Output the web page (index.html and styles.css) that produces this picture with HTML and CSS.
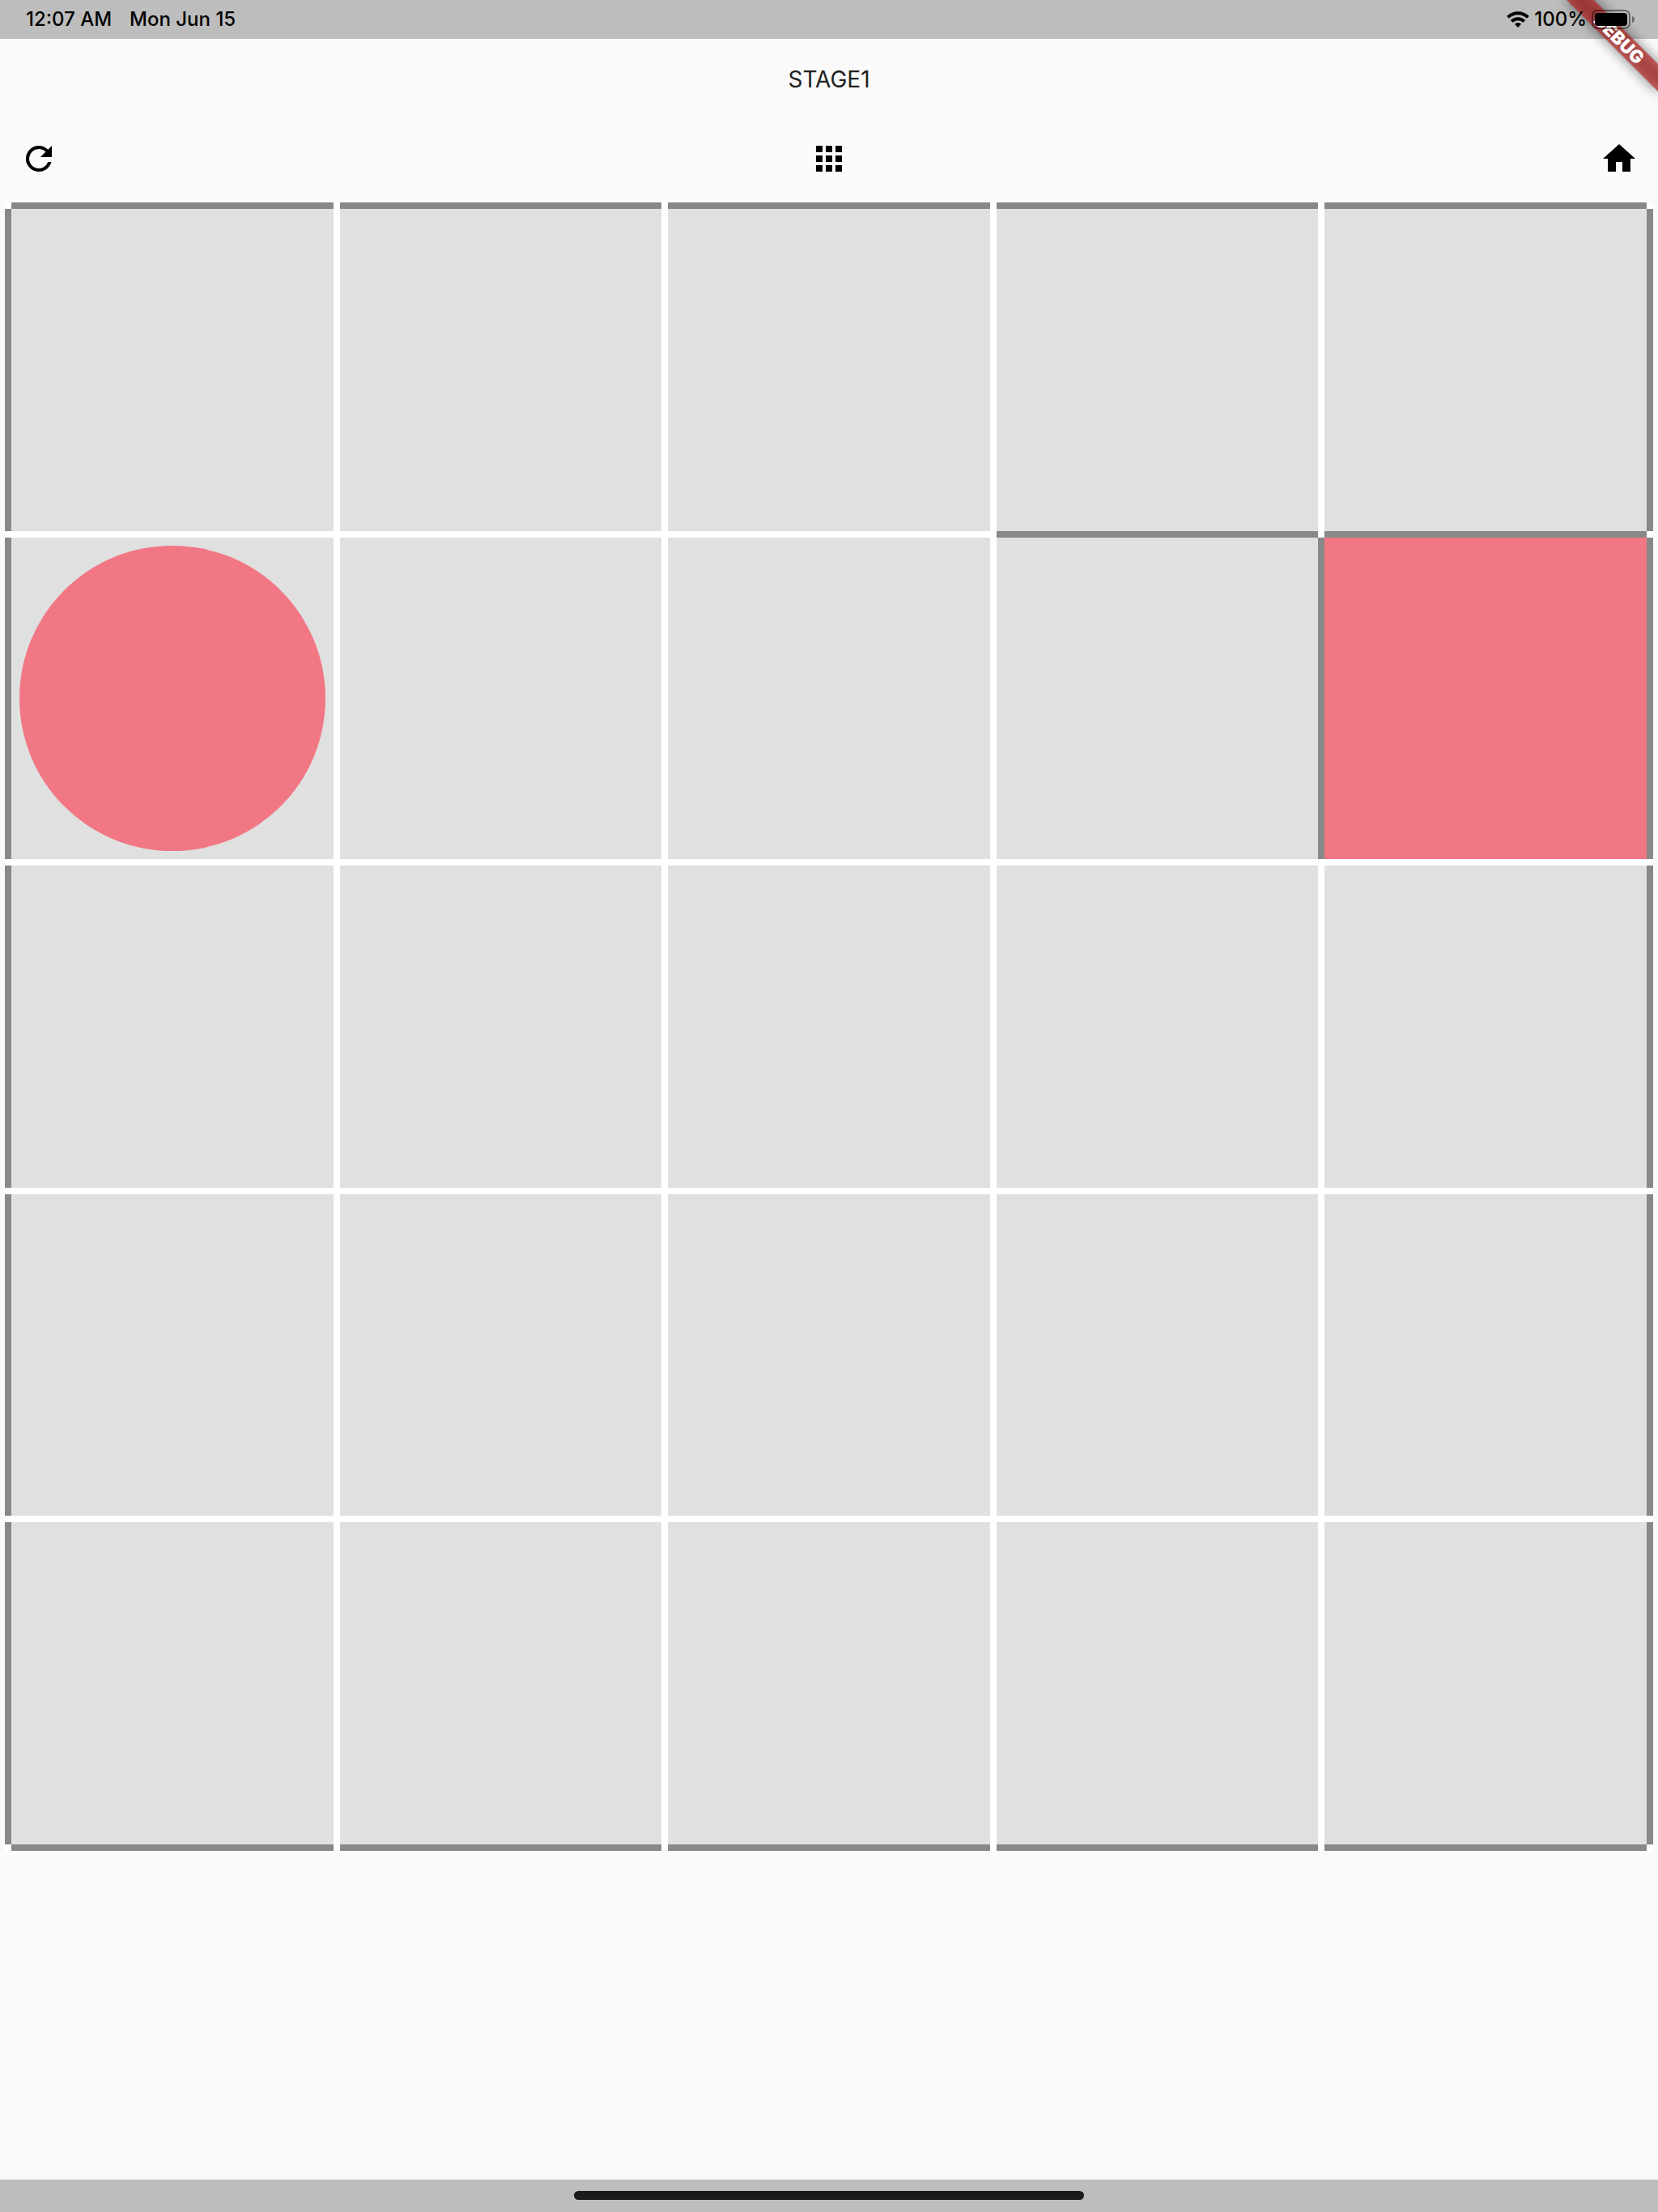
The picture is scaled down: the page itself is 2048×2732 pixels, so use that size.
FILE: index.html
```html
<!DOCTYPE html>
<html lang="en">
<head>
<meta charset="utf-8">
<meta name="viewport" content="width=device-width, initial-scale=1">
<title>STAGE1</title>
<link rel="stylesheet" href="styles.css">
</head>
<body>
<header class="status">
  <div class="status-group">
    <span>12:07 AM</span>
    <span>Mon Jun 15</span>
  </div>
  <div class="ribbon">
    <div class="ribbon-shadow"></div>
    <div class="ribbon-band">DEBUG</div>
  </div>
  <div class="status-group indicators">
    <svg class="wifi" viewBox="0 0 28 20" aria-hidden="true">
      <g fill="none" stroke="#000" stroke-width="4">
        <path d="M1.6 7.4A17.4 17.4 0 0 1 26.4 7.4"/>
        <path d="M6.2 12.4A11 11 0 0 1 21.8 12.4"/>
      </g>
      <path d="M14 20l-4-4.2a5.6 5.6 0 0 1 8 0z"/>
    </svg>
    <span>100%</span>
    <svg class="battery" viewBox="0 0 54 24" aria-hidden="true">
      <rect x="1" y="1" width="46" height="22" rx="6" fill="none" stroke="#000" stroke-opacity=".45" stroke-width="2"/>
      <rect x="4" y="4" width="40" height="16" rx="4"/>
      <path d="M50 8q3 1 3 4t-3 4z" fill-opacity=".45"/>
    </svg>
  </div>
</header>

<main class="game">
  <h1 class="title">STAGE1</h1>
  <nav class="toolbar">
    <button class="tool" type="button" aria-label="Restart">
      <svg viewBox="0 0 24 24"><path d="M17.65 6.35A7.96 7.96 0 0 0 12 4a8 8 0 1 0 7.73 10h-2.08A6 6 0 1 1 12 6c1.66 0 3.14.69 4.22 1.78L13 11h7V4z"/></svg>
    </button>
    <button class="tool" type="button" aria-label="Stages">
      <svg viewBox="0 0 24 24"><path d="M4 8h4V4H4zm6 12h4v-4h-4zm-6 0h4v-4H4zm0-6h4v-4H4zm6 0h4v-4h-4zm6-10v4h4V4zm-6 4h4V4h-4zm6 6h4v-4h-4zm0 6h4v-4h-4z"/></svg>
    </button>
    <button class="tool" type="button" aria-label="Home">
      <svg viewBox="0 0 24 24"><path d="M10 20v-6h4v6h5v-8h3L12 3 2 12h3v8z"/></svg>
    </button>
  </nav>

  <div class="board">
    <div class="cell wall-top wall-left"></div>
    <div class="cell wall-top"></div>
    <div class="cell wall-top"></div>
    <div class="cell wall-top"></div>
    <div class="cell wall-top wall-right"></div>

    <div class="cell wall-left"><div class="ball"></div></div>
    <div class="cell"></div>
    <div class="cell"></div>
    <div class="cell wall-top"></div>
    <div class="cell goal wall-top wall-left wall-right"></div>

    <div class="cell wall-left"></div>
    <div class="cell"></div>
    <div class="cell"></div>
    <div class="cell"></div>
    <div class="cell wall-right"></div>

    <div class="cell wall-left"></div>
    <div class="cell"></div>
    <div class="cell"></div>
    <div class="cell"></div>
    <div class="cell wall-right"></div>

    <div class="cell wall-bottom wall-left"></div>
    <div class="cell wall-bottom"></div>
    <div class="cell wall-bottom"></div>
    <div class="cell wall-bottom"></div>
    <div class="cell wall-bottom wall-right"></div>
  </div>
</main>

<footer class="home-bar"><div class="home-indicator"></div></footer>
</body>
</html>
```
FILE: styles.css
```css
* {
  box-sizing: border-box;
}

body {
  display: flex;
  flex-direction: column;
  min-height: 100vh;
  margin: 0;
  background: #fafafa;
  color: #000;
  font-family: Inter, "Liberation Sans", sans-serif;
}

.status {
  position: relative;
  display: flex;
  align-items: center;
  justify-content: space-between;
  height: 48px;
  padding: 0 28px 0 32px;
  background: #bdbdbd;
  font-size: 24px;
  font-weight: 500;
  line-height: 48px;
}

.status-group {
  display: flex;
  align-items: center;
  gap: 22px;
}

.indicators {
  position: relative;
  z-index: 2;
  gap: 6px;
}

.wifi {
  width: 28px;
  height: 20px;
}

.battery {
  width: 54px;
  height: 24px;
}

/* Corner ribbon, clipped to the top right of the window */
.ribbon {
  position: absolute;
  z-index: 1;
  top: 0;
  right: 0;
  width: 180px;
  height: 180px;
  overflow: hidden;
  pointer-events: none;
}

.ribbon-shadow,
.ribbon-band {
  position: absolute;
  top: 36px;
  left: 52px;
  width: 160px;
  height: 24px;
  transform: rotate(45deg);
}

.ribbon-shadow {
  background: rgba(0, 0, 0, 0.5);
  filter: blur(8px);
}

.ribbon-band {
  background: rgba(183, 28, 28, 0.63);
  color: #fff;
  font-size: 22px;
  font-weight: 900;
  line-height: 24px;
  text-align: center;
}

.game {
  flex: 1;
}

.title {
  margin: 0;
  color: #212121;
  font-size: 28px;
  font-weight: 400;
  line-height: 100px;
  text-align: center;
}

.toolbar {
  display: flex;
  justify-content: space-between;
}

.tool {
  padding: 24px;
  border: 0;
  background: none;
  cursor: pointer;
}

.tool svg {
  display: block;
  width: 48px;
  height: 48px;
}

.board {
  display: grid;
  grid-template-columns: repeat(5, 1fr);
  gap: 8px;
  margin: 6px;
  padding: 8px;
  background: #fff;
}

/* Walls are solid shadows that fill the 8px gap beside a cell */
.cell {
  --top: 0 0 #888;
  --right: 0 0 #888;
  --bottom: 0 0 #888;
  --left: 0 0 #888;
  aspect-ratio: 1;
  padding: 10px;
  background: #e0e0e0;
  box-shadow: var(--top), var(--right), var(--bottom), var(--left);
}

.wall-top {
  --top: 0 -8px #888;
}

.wall-right {
  --right: 8px 0 #888;
}

.wall-bottom {
  --bottom: 0 8px #888;
}

.wall-left {
  --left: -8px 0 #888;
}

.goal {
  background: #f27784;
}

.ball {
  height: 100%;
  border-radius: 50%;
  background: #f27784;
}

.home-bar {
  display: flex;
  justify-content: center;
  height: 40px;
  padding-top: 14px;
  background: #bdbdbd;
}

.home-indicator {
  width: 31%;
  max-width: 630px;
  height: 11px;
  border-radius: 6px;
  background: #1b1b1b;
}
```
